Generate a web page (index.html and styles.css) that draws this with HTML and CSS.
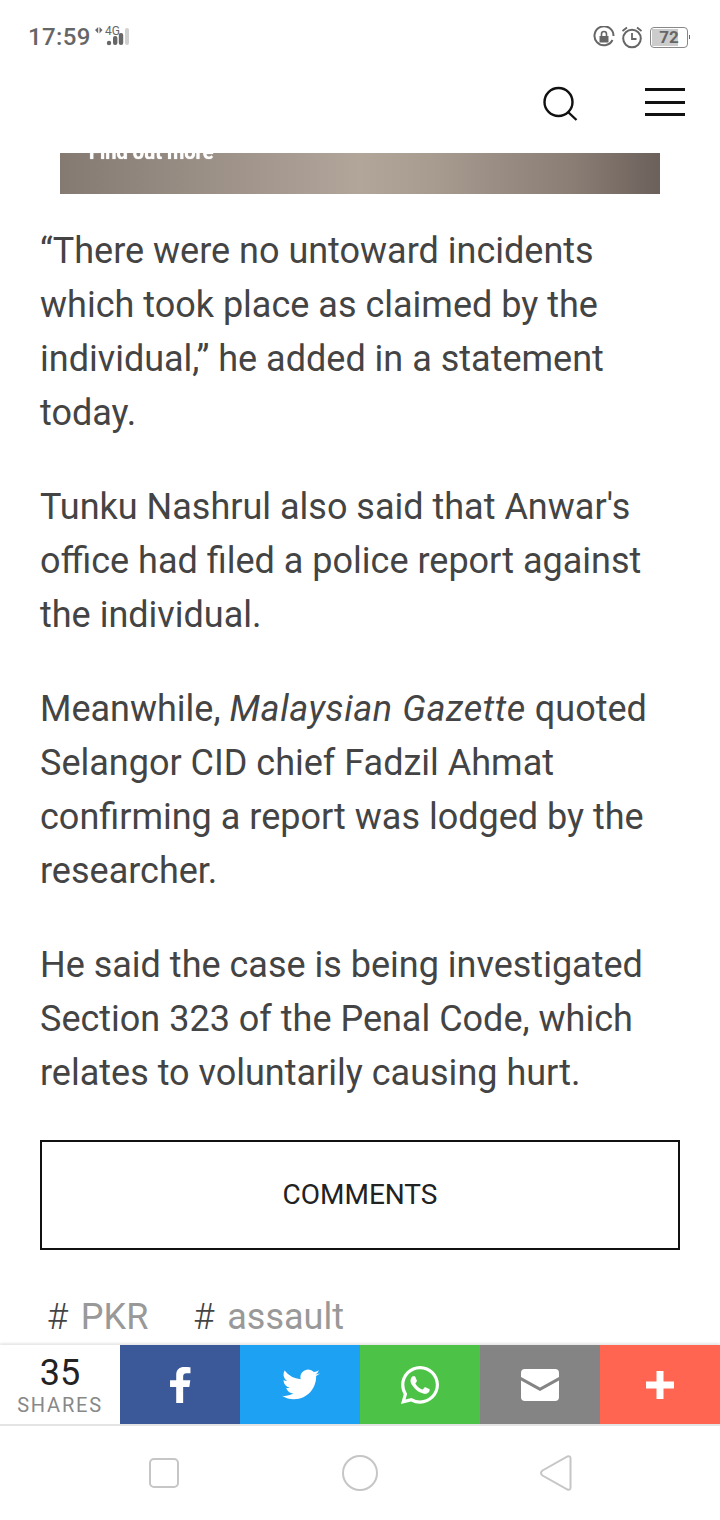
FILE: index.html
```html
<!DOCTYPE html>
<html lang="en">
<head>
  <meta charset="UTF-8">
  <meta name="viewport" content="width=device-width, initial-scale=1.0">
  <title>Article</title>
  <link rel="stylesheet" href="styles.css">
</head>
<body>
  <div class="status-bar">
    <div class="status-left">
      <span class="clock">17:59</span>
      <svg class="net-icon" width="42" height="24" viewBox="0 0 42 24">
        <path d="M1 5 4.200 2v6.500zM5.500 2 8.500 5 5.500 8.500z" fill="#6a6a6a"/>
        <text x="11" y="10" class="net-text">4G</text>
        <circle cx="15" cy="18" r="2.200" fill="#666"/>
        <rect x="19" y="11" width="4.400" height="9" rx="2" fill="#666"/>
        <rect x="24.800" y="8" width="4.400" height="12" rx="2" fill="#666"/>
        <rect x="31" y="3" width="4" height="17" rx="2" fill="#d0d0d0"/>
      </svg>
    </div>
    <div class="status-right">
      <svg width="22" height="22" viewBox="0 0 22 22">
        <path d="M19.500 14A9.500 9.500 0 1 1 20.500 10" fill="none" stroke="#666" stroke-width="2"/>
        <path d="M6.500 10h9v6.500h-9z" fill="#666"/>
        <path d="M8.500 10V8a2.500 2.500 0 0 1 5 0v2" fill="none" stroke="#666" stroke-width="1.600"/>
      </svg>
      <svg width="22" height="24" viewBox="0 0 22 24">
        <circle cx="11" cy="13.500" r="8.800" fill="none" stroke="#666" stroke-width="2"/>
        <path d="M11 8v6h4.500" fill="none" stroke="#666" stroke-width="1.800"/>
        <path d="M1.500 6 6 2.500M20.500 6 16 2.500" stroke="#666" stroke-width="1.800"/>
      </svg>
      <div class="battery">
        <div class="battery-body">
          <div class="battery-fill" style="width:72%"></div>
          <span class="battery-num">72</span>
        </div>
        <div class="battery-tip"></div>
      </div>
    </div>
  </div>

  <header class="site-header">
    <svg class="search-icon" width="36" height="36" viewBox="0 0 36 36">
      <circle cx="16.500" cy="16" r="14" fill="none" stroke="#111" stroke-width="2.400"/>
      <path d="M26 26 34.500 34" stroke="#111" stroke-width="2.400"/>
    </svg>
    <div class="burger">
      <span></span>
      <span></span>
      <span></span>
    </div>
  </header>

  <div class="banner"><span class="banner-text">Find out more</span></div>

  <main class="article">
    <p>“There were no untoward incidents which took place as claimed by the individual,” he added in a statement today.</p>
    <p>Tunku Nashrul also said that Anwar's office had filed a police report against the individual.</p>
    <p>Meanwhile, <em>Malaysian Gazette</em> quoted Selangor CID chief Fadzil Ahmat confirming a report was lodged by the researcher.</p>
    <p>He said the case is being investigated Section 323 of the Penal Code, which relates to voluntarily causing hurt.</p>
  </main>

  <div class="comments-btn">COMMENTS</div>

  <div class="tags">
    <div class="tag"><span class="hash">#</span> PKR</div>
    <div class="tag"><span class="hash">#</span> assault</div>
  </div>

  <div class="share-bar">
    <div class="share-count">
      <div class="count-num">35</div>
      <div class="count-label">SHARES</div>
    </div>
    <div class="share-btn fb">
      <svg width="23" height="38" viewBox="0 0 24 40"><path d="M7.500 39V22H1v-7h6.500V9.500C7.500 3.500 11 1 16 1c2.500 0 5 .2 6.500.4V7.500H18.500c-3 0-3.700 1.500-3.700 3.500v4h7.500l-1 7h-6.500v17z" fill="#fff"/></svg>
    </div>
    <div class="share-btn tw">
      <svg class="tw-icon" width="38" height="32" viewBox="0 0 24 20"><path d="M23.950 2.570a9.800 9.800 0 0 1-2.820.77 4.930 4.930 0 0 0 2.160-2.720 9.800 9.800 0 0 1-3.120 1.190 4.920 4.920 0 0 0-8.380 4.480A13.940 13.940 0 0 1 1.640.90a4.920 4.920 0 0 0 1.520 6.570 4.900 4.900 0 0 1-2.230-.62v.06a4.920 4.920 0 0 0 3.950 4.830 4.900 4.900 0 0 1-2.220.08 4.930 4.930 0 0 0 4.600 3.420A9.870 9.870 0 0 1 0 16.770 13.950 13.950 0 0 0 7.550 19c9.060 0 14-7.500 14-14v-.64a10 10 0 0 0 2.400-1.790z" fill="#fff"/></svg>
    </div>
    <div class="share-btn wa">
      <svg width="38" height="38" viewBox="0 0 24 24"><path fill-rule="evenodd" fill="#fff" d="M12.050 0C5.460 0 .1 5.340.1 11.900c0 2.100.55 4.150 1.600 5.950L0 24l6.320-1.650a12 12 0 0 0 5.730 1.450C18.640 23.800 24 18.460 24 11.900 24 5.340 18.640 0 12.050 0zm0 21.800a9.950 9.950 0 0 1-5.070-1.390l-.36-.22-3.750.98 1-3.650-.24-.38a9.830 9.830 0 0 1-1.520-5.240c0-5.450 4.450-9.900 9.940-9.900 5.480 0 9.950 4.450 9.950 9.900 0 5.460-4.470 9.900-9.950 9.900z"/><path fill="#fff" d="M17.500 14.400c-.3-.15-1.770-.87-2.040-.97-.27-.1-.47-.15-.67.15-.2.3-.77.97-.95 1.170-.17.2-.35.22-.65.07-.3-.15-1.260-.46-2.400-1.480-.88-.79-1.480-1.760-1.650-2.060-.17-.3-.02-.46.13-.6.13-.14.3-.35.45-.53.15-.17.2-.3.3-.5.1-.2.05-.37-.03-.52-.07-.15-.67-1.620-.92-2.220-.24-.58-.49-.5-.67-.51h-.57c-.2 0-.52.07-.8.37-.27.3-1.040 1.020-1.040 2.480 0 1.470 1.070 2.880 1.220 3.080.15.2 2.100 3.200 5.080 4.480.71.31 1.270.49 1.700.63.71.23 1.360.2 1.870.12.57-.09 1.770-.72 2.020-1.420.25-.7.25-1.300.17-1.420-.07-.13-.27-.2-.57-.35z"/></svg>
    </div>
    <div class="share-btn em">
      <svg width="38" height="32" viewBox="0 0 38 32"><path d="M4 0h30a4 4 0 0 1 4 4v4L19 18.500 0 8V4a4 4 0 0 1 4-4zM0 11.500 19 22l19-10.500V28a4 4 0 0 1-4 4H4a4 4 0 0 1-4-4z" fill="#fff"/></svg>
    </div>
    <div class="share-btn more">
      <svg width="28" height="28" viewBox="0 0 28 28"><path d="M10.500 0h7v10.500H28v7H17.500V28h-7V17.500H0v-7h10.500z" fill="#fff"/></svg>
    </div>
  </div>

  <nav class="nav-bar">
    <svg width="30" height="30" viewBox="0 0 30 30"><rect x="1" y="1" width="28" height="28" rx="4" fill="none" stroke="#c6c6c6" stroke-width="2"/></svg>
    <svg width="36" height="36" viewBox="0 0 36 36"><circle cx="18" cy="18" r="17" fill="none" stroke="#c6c6c6" stroke-width="2"/></svg>
    <svg width="32" height="36" viewBox="0 0 32 36"><path d="M2.500 15.500 27.500 1.500Q30.500 .5 30.500 3.500V32.500Q30.500 35.500 27.500 34.500L2.500 20.500Q-.5 18 2.500 15.500z" fill="none" stroke="#c6c6c6" stroke-width="2"/></svg>
  </nav>
</body>
</html>
```

FILE: styles.css
```css
body {
  margin: 0;
  width: 720px;
  height: 1520px;
  overflow: hidden;
  background-color: white;
  font-family: Roboto, sans-serif;
  color: #444;
  display: flex;
  flex-direction: column;
}
.status-bar {
  height: 70px;
  padding: 4px 30px 0 28px;
  display: flex;
  justify-content: space-between;
  align-items: center;
  box-sizing: border-box;
  flex-shrink: 0;
}
.status-left {
  display: flex;
  align-items: center;
  gap: 3px;
}
.clock {
  font-size: 24px;
  font-weight: 500;
  color: #666;
  letter-spacing: .4px;
}
.net-text {
  font-size: 12px;
  fill: #666;
}
.status-right {
  display: flex;
  align-items: center;
  gap: 6px;
}
.battery {
  display: flex;
  align-items: center;
  gap: 1px;
  margin-left: 1px;
}
.battery-body {
  width: 36px;
  height: 19px;
  border: 1px solid #888;
  border-radius: 4px;
  position: relative;
  display: flex;
  align-items: center;
  justify-content: center;
}
.battery-fill {
  position: absolute;
  left: 1px;
  top: 1px;
  bottom: 1px;
  background-color: #ccc;
}
.battery-num {
  position: relative;
  font-size: 17px;
  font-weight: 700;
  color: #666;
}
.battery-tip {
  width: 1px;
  height: 4px;
  background-color: #666;
}
.site-header {
  height: 83px;
  padding: 0 35px 19px 0;
  box-sizing: border-box;
  display: flex;
  justify-content: flex-end;
  align-items: center;
  gap: 67px;
  flex-shrink: 0;
}
.search-icon {
  margin-top: 4px;
}
.burger {
  width: 40px;
  display: flex;
  flex-direction: column;
  gap: 9.500px;
}
.burger span {
  height: 3px;
  background-color: #111;
}
.banner {
  height: 41px;
  margin: 0 60px;
  overflow: hidden;
  background: linear-gradient(90deg, #857a72 0%, #b2a69b 50%, #a89c91 62%, #8a7e75 85%, #6c605b 100%);
  padding-left: 29px;
  flex-shrink: 0;
}
.banner-text {
  display: block;
  margin-top: -11px;
  font-size: 20px;
  line-height: 20px;
  font-weight: 700;
  color: white;
  text-shadow: 0 0 1px white;
  filter: blur(.5px);
}
.article {
  padding: 30px 40px 0;
  flex-shrink: 0;
}
.article p {
  margin: 0 0 40px;
  font-size: 36px;
  line-height: 54px;
  color: #444;
}
.article em {
  letter-spacing: .58px;
}
.comments-btn {
  margin: 0 40px;
  height: 110px;
  box-sizing: border-box;
  border: 2px solid #111;
  padding-bottom: 2px;
  display: flex;
  align-items: center;
  justify-content: center;
  font-size: 28px;
  color: #222;
  flex-shrink: 0;
}
.tags {
  height: 95px;
  padding: 45px 47px 0;
  box-sizing: border-box;
  display: flex;
  gap: 45px;
  flex-shrink: 0;
  overflow: hidden;
}
.tag {
  font-size: 36px;
  line-height: 44px;
  color: #999;
}
.hash {
  color: #444;
  font-weight: 300;
  margin-right: 4px;
}
.share-bar {
  height: 79px;
  display: flex;
  flex-shrink: 0;
  border-bottom: 2px solid #e4e4e4;
  box-shadow: 0 -2px 2px #e8e8e8;
}
.share-count {
  width: 120px;
  text-align: center;
}
.count-num {
  font-size: 36px;
  line-height: 38px;
  margin-top: 9px;
  color: #222;
}
.count-label {
  font-size: 20px;
  line-height: 24px;
  margin-top: 1px;
  letter-spacing: 1.800px;
  color: #888;
}
.share-btn {
  width: 120px;
  display: flex;
  align-items: center;
  justify-content: center;
}
.tw-icon {
  margin-left: 2px;
}
.fb { background-color: #3b5998; }
.tw { background-color: #1da1f2; }
.wa { background-color: #4cc247; }
.em { background-color: #848484; }
.more { background-color: #ff6550; }
.nav-bar {
  flex: 1;
  display: flex;
  align-items: center;
  justify-content: space-between;
  padding: 0 148px 0 149px;
}
```
